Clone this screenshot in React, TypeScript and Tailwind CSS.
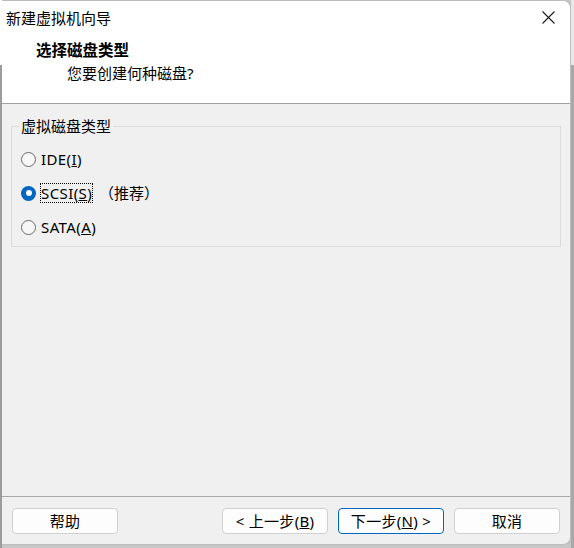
import React from "react";

function Radio({ checked }: { checked?: boolean }) {
  if (checked) {
    return (
      <span className="w-[15px] h-[15px] rounded-full bg-[#0067c0] flex items-center justify-center shrink-0">
        <span className="w-[6px] h-[6px] rounded-full bg-white" />
      </span>
    );
  }
  return <span className="w-[15px] h-[15px] rounded-full border border-[#6a6a6a] bg-[#f7f7f7] shrink-0" />;
}

function Btn({ children, primary }: { children: React.ReactNode; primary?: boolean }) {
  return (
    <div
      className={
        "w-[106px] h-[26px] rounded-[4px] bg-[#fdfdfd] border flex items-center justify-center text-[15px] leading-[20px] tracking-[0.3px] " +
        (primary ? "border-[#0067c0]" : "border-[#d0d0d0]")
      }
    >
      {children}
    </div>
  );
}

export default function App() {
  return (
    <div className="w-[574px] h-[548px] flex bg-[#c4c4c4] font-['Noto_Sans','Noto_Sans_CJK_SC',sans-serif] text-black overflow-hidden">
      <div className="w-[2px] flex flex-col shrink-0">
        <div className="h-[65px] bg-white" />
        <div className="flex-1 bg-[#9c9c9c]" />
      </div>
      <div className="w-[569px] flex flex-col shrink-0">
        <div className="h-[545px] flex flex-col bg-[#f0f0f0] border-t border-r border-b border-[#bdbdbd] rounded-tr-[8px] rounded-br-[8px] overflow-hidden">
          <div className="h-[102px] bg-white flex flex-col">
            <div className="h-[33px] flex items-center justify-between">
              <span className="pl-[4px] text-[15px] leading-[20px]">新建虚拟机向导</span>
              <span className="w-[46px] h-[33px] flex items-center justify-center mr-[-1px]">
                <svg width="13" height="13" viewBox="0 0 13 13">
                  <path d="M0.5 0.5 L12.5 12.5 M12.5 0.5 L0.5 12.5" stroke="#1a1a1a" strokeWidth="1.1" fill="none" />
                </svg>
              </span>
            </div>
            <div className="flex flex-col gap-[3px] pt-[6px]">
              <span className="pl-[34px] text-[15.5px] leading-[20px] font-bold">选择磁盘类型</span>
              <span className="pl-[65px] text-[15px] leading-[20px]">您要创建何种磁盘?</span>
            </div>
          </div>
          <div className="h-px bg-[#a0a0a0]" />
          <div className="flex-1 flex flex-col pt-[12px] pl-[9px] pr-[9px]">
            <fieldset className="border border-[#dcdcdc] px-[7px] pt-[13px] pb-[9px]">
              <legend className="px-[2px] text-[15px] leading-[20px]">虚拟磁盘类型</legend>
              <div className="flex flex-col gap-[14px] pl-[2px]">
                <div className="h-[20px] flex items-center gap-[4px]">
                  <Radio />
                  <span className="border border-transparent text-[15px] leading-[18px] tracking-[0.4px]">
                    IDE(<span className="underline">I</span>)
                  </span>
                </div>
                <div className="h-[20px] flex items-center gap-[4px]">
                  <Radio checked />
                  <span className="border border-dotted border-black text-[15px] leading-[18px] tracking-[0.4px]">
                    SCSI(<span className="underline">S</span>)
                  </span>
                  <span className="text-[15px] leading-[18px] ml-[2px]">（推荐）</span>
                </div>
                <div className="h-[20px] flex items-center gap-[4px]">
                  <Radio />
                  <span className="border border-transparent text-[15px] leading-[18px] tracking-[0.4px]">
                    SATA(<span className="underline">A</span>)
                  </span>
                </div>
              </div>
            </fieldset>
          </div>
          <div className="h-px bg-[#a8a8a8]" />
          <div className="h-[47px] flex items-start pt-[11px] pl-[10px] pr-[10px]">
            <Btn>帮助</Btn>
            <div className="flex-1" />
            <div className="flex gap-[10px]">
              <Btn>
                &lt; 上一步(<span className="underline">B</span>)
              </Btn>
              <Btn primary>
                下一步(<span className="underline">N</span>) &gt;
              </Btn>
              <Btn>取消</Btn>
            </div>
          </div>
        </div>
        <div className="flex-1 bg-[#c8c8c8]" />
      </div>
      <div className="w-[3px] flex flex-col shrink-0">
        <div className="h-[65px] bg-[#e8e8e8]" />
        <div className="flex-1 bg-[#a8a8a8]" />
      </div>
    </div>
  );
}
